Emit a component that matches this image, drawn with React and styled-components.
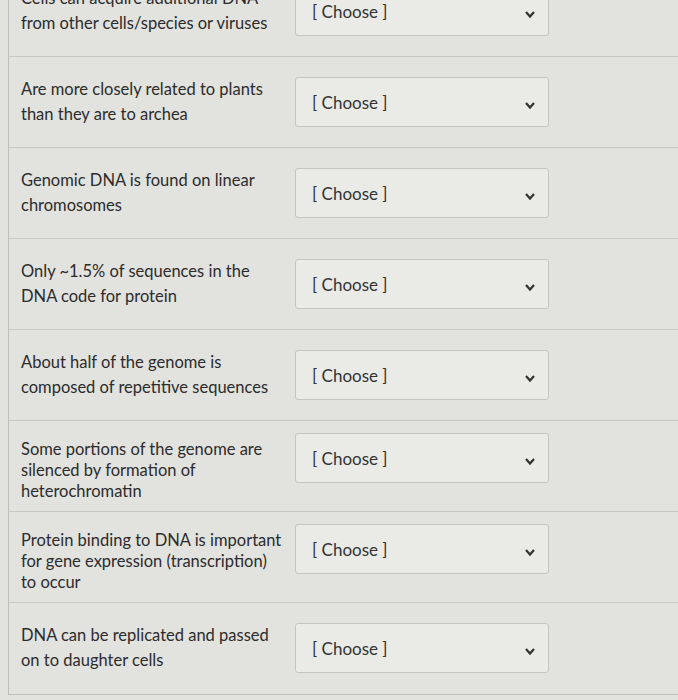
import React from "react";
import styled, { createGlobalStyle } from "styled-components";

const GlobalStyle = createGlobalStyle`
  html, body {
    margin: 0;
    padding: 0;
    background: #e2e2df;
    overflow: hidden;
  }
  body {
    font-family: Lato, "Open Sans", "Liberation Sans", sans-serif;
    color: #2c2c2c;
  }
`;

const questions = [
  ["Cells can acquire additional DNA", "from other cells/species or viruses"],
  ["Are more closely related to plants", "than they are to archea"],
  ["Genomic DNA is found on linear", "chromosomes"],
  ["Only ~1.5% of sequences in the", "DNA code for protein"],
  ["About half of the genome is", "composed of repetitive sequences"],
  ["Some portions of the genome are", "silenced by formation of", "heterochromatin"],
  ["Protein binding to DNA is important", "for gene expression (transcription)", "to occur"],
  ["DNA can be replicated and passed", "on to daughter cells"],
];

const Sheet = styled.div`
  height: 700px;
  overflow: hidden;
`;

const List = styled.div`
  margin: -34px 0 0 8px;
  border-left: 1px solid #bdbdbb;
  border-bottom: 1px solid #bdbdbb;
`;

const Row = styled.div`
  display: flex;
  align-items: flex-start;
  gap: 8px;
  box-sizing: border-box;
  height: 91px;
  padding: ${(p) => (p.$lines > 2 ? 12 : 20)}px 0 0 12px;
  border-bottom: ${(p) => (p.$last ? "none" : "1px solid #c8c8c5")};
`;

const Label = styled.div`
  width: 266px;
  font-size: 16.5px;
  line-height: ${(p) => (p.$lines > 2 ? 21 : 25)}px;
  padding-top: ${(p) => (p.$lines > 2 ? 6 : 0)}px;
`;

const Select = styled.div`
  width: 254px;
  height: 50px;
  box-sizing: border-box;
  display: flex;
  align-items: center;
  justify-content: space-between;
  padding: 0 12px 0 16px;
  background: #eaeae7;
  border: 1px solid #c4c4c1;
  border-radius: 3px;
  font-size: 17px;
  color: #333;
`;

const Chevron = styled.svg`
  width: 12px;
  height: 12px;
  margin-top: 6px;
`;

const ChooseBox = () => (
  <Select>
    <span>[ Choose ]</span>
    <Chevron viewBox="0 0 12 12">
      <path d="M2 4 L6 8.5 L10 4" fill="none" stroke="#333" strokeWidth="2.2" />
    </Chevron>
  </Select>
);

export default function App() {
  return (
    <Sheet>
      <GlobalStyle />
      <List>
        {questions.map((lines, i) => (
          <Row key={i} $lines={lines.length} $last={i === questions.length - 1}>
            <Label $lines={lines.length}>
              {lines.map((l, j) => (
                <div key={j}>{l}</div>
              ))}
            </Label>
            <ChooseBox />
          </Row>
        ))}
      </List>
    </Sheet>
  );
}
